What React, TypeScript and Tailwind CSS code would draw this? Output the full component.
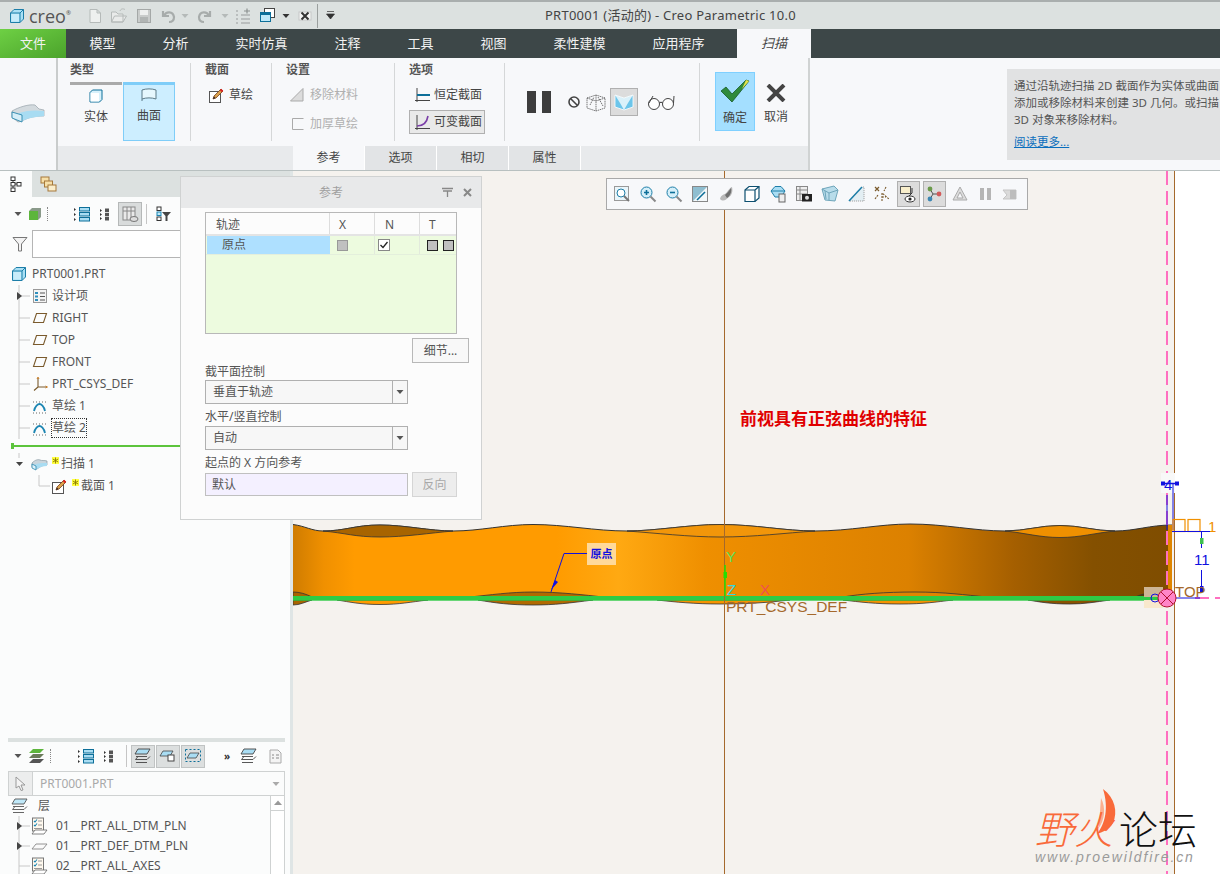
import React from "react";

const Svg = ({ s = 16, h, children }: { s?: number; h?: number; children: React.ReactNode }) => (
  <svg width={s} height={h ?? s} viewBox={`0 0 ${s} ${h ?? s}`} fill="none" className="shrink-0">
    {children}
  </svg>
);

const Cube = () => (
  <Svg s={16}>
    <path d="M1.5 5 L5 1.5 H14.5 V11 L11 14.5 H1.5 Z" fill="#a9e0f5" stroke="#1d7ea8" />
    <path d="M1.5 5 H11 V14.5 M11 5 L14.5 1.5" stroke="#1d7ea8" />
    <rect x={2.5} y={6} width={7.5} height={7.5} fill="#e8f8ff" opacity={0.5} />
  </Svg>
);

const Sweep = () => (
  <Svg s={17} h={14}>
    <path d="M1 6 C4 3 7 2 9 3 C11 4 13 3 16 4 V8 C12 8 10 9 6 12 L1 10 Z" fill="#c9d5dc" stroke="#8a9aa3" strokeWidth={0.7} />
    <path d="M3 8 C7 6 11 6 16 6 V9 C12 9 9 10 6 12 L3 11 Z" fill="#a8dcf2" />
    <path d="M1 7 L5 9 V13 L1 11 Z" fill="#dff3fb" stroke="#2a87ad" strokeWidth={0.8} />
  </Svg>
);

const Pencil = () => (
  <Svg s={17}>
    <rect x={1.5} y={4.5} width={11} height={11} fill="#fff" stroke="#555" />
    <path d="M5 12 L6 9 L13 2 L15 4 L8 11 Z" fill="#d9a24c" stroke="#7a3b1d" strokeWidth={0.8} />
    <path d="M12.5 2.5 L14.5 4.5" stroke="#d22" strokeWidth={2} />
    <path d="M5 12 L6 9.6 L7.4 11 Z" fill="#222" />
  </Svg>
);

const Plane = () => (
  <Svg s={16} h={12}>
    <path d="M4.5 1.5 H14.5 L11.5 10.5 H1.5 Z" stroke="#7a5a2c" strokeWidth={1.1} />
  </Svg>
);

const SketchIc = () => (
  <Svg s={15}>
    <path d="M2 12 C3 7 6 5 7.5 5 C9 5 12 7 13 12" stroke="#1d86b3" strokeWidth={1.8} />
    <path d="M1 3 H14 M1 14 H14" stroke="#666" strokeWidth={1} strokeDasharray="1 2" />
  </Svg>
);

const Csys = () => (
  <Svg s={16}>
    <path d="M6 2 V11 H15 M6 11 L2 14.5" stroke="#7a5a2c" strokeWidth={1.1} />
    <path d="M5 3 L6 1 L7 3 M13.5 10 L15.5 11 L13.5 12" stroke="#c77b20" strokeWidth={0.9} />
  </Svg>
);

const ListIc = () => (
  <Svg s={16}>
    <rect x={1.5} y={1.5} width={13} height={13} fill="#f4f4f4" stroke="#999" />
    <path d="M3 4 H6 V6 H3 Z M3 7.5 H6 V9.5 H3 Z M3 11 H6 V13 H3 Z" fill="#2f8fbd" />
    <path d="M8 5 H13 M8 8.5 H13 M8 12 H13" stroke="#555" />
  </Svg>
);

const LinesIc = () => (
  <Svg s={16}>
    <path d="M0 2 L2 3.5 L0 5 Z M0 7 L2 8.5 L0 10 Z M0 12 L2 13.5 L0 15 Z" fill="#333" />
    <rect x={5.5} y={1.5} width={10} height={3.5} fill="#a9ddf3" stroke="#0d6f99" />
    <rect x={5.5} y={6.5} width={10} height={3.5} fill="#a9ddf3" stroke="#0d6f99" />
    <rect x={5.5} y={11.5} width={10} height={3.5} fill="#a9ddf3" stroke="#0d6f99" />
  </Svg>
);

const DotsIc = () => (
  <Svg s={11} h={14}>
    <path d="M0 2 L2 3.5 L0 5 Z M0 6 L2 7.5 L0 9 Z M0 10 L2 11.5 L0 13 Z" fill="#333" />
    <rect x={5} y={1.5} width={4} height={3.5} fill="#555" />
    <rect x={5} y={5.8} width={4} height={3.5} fill="#555" />
    <rect x={5} y={10} width={4} height={3.5} fill="#555" />
  </Svg>
);

const Layers = ({ top = "#a9ddf3", stroke = "#444" }: { top?: string; stroke?: string }) => (
  <Svg s={18}>
    <path d="M4 2 H16 L13 7 H1 Z" fill={top} stroke={stroke} strokeWidth={0.9} />
    <path d="M2 9.5 H13 M1.5 12.5 L4 9.5 M16 9.5 L13 12.5 H1.5 M2 15.5 H13" stroke={stroke} strokeWidth={0.9} />
  </Svg>
);

const LayerRowIc = ({ flat }: { flat?: boolean }) =>
  flat ? (
    <Svg s={17} h={14}>
      <path d="M5 5 H16 L12 10 H1 Z" stroke="#888" strokeWidth={0.9} fill="#fafafa" />
    </Svg>
  ) : (
    <Svg s={17} h={18}>
      <rect x={1.5} y={1} width={11} height={13} fill="#fff9ee" stroke="#777" />
      <path d="M3 4 L4 5 L6 2.5 M3 8 L4 9 L6 6.5" stroke="#1d86b3" strokeWidth={1.1} />
      <path d="M7 4 H11 M7 8 H11 M3 11.5 H11" stroke="#999" />
      <path d="M4 13 H16 L13 17 H1 Z" fill="#fff" stroke="#666" strokeWidth={0.8} />
    </Svg>
  );

const Star = () => (
  <svg width={7} height={7} viewBox="0 0 7 7" className="shrink-0 mb-[7px]">
    <rect width={7} height={7} fill="#ffff40" />
    <path d="M3.5 0.5 V6.5 M0.8 2 L6.2 5 M6.2 2 L0.8 5" stroke="#8a7a00" strokeWidth={0.9} />
  </svg>
);

const Arrow = ({ dir = "right", color = "#444" }: { dir?: "right" | "down"; color?: string }) => (
  <svg width={8} height={8} viewBox="0 0 8 8" className="shrink-0">
    <path d={dir === "right" ? "M2 1 L6 4 L2 7 Z" : "M0.5 2 H7.5 L4 6 Z"} fill={color} />
  </svg>
);

const tabs = ["模型", "分析", "实时仿真", "注释", "工具", "视图", "柔性建模", "应用程序"];

const QuickBar = () => (
  <div className="h-[29px] bg-[#dce1e0] border-t-2 border-[#a9aeae] flex items-center text-[#555] shrink-0">
    <div className="w-[83px] pl-[9px] flex items-center gap-[4px] shrink-0">
      <Cube />
      <span className="text-[18px] leading-none text-[#555] [font-family:'Open_Sans',sans-serif]">creo</span>
      <span className="text-[6px] -ml-[4px] -mt-[4px]">®</span>
    </div>
    <div className="w-[24px] flex justify-center">
      <Svg s={16}>
        <path d="M3 1.5 H10 L13.5 5 V14.5 H3 Z M10 1.5 V5 H13.5" fill="#eef0ef" stroke="#b5bab9" />
      </Svg>
    </div>
    <div className="w-[24px] flex justify-center">
      <Svg s={18}>
        <path d="M1.5 15 V5 H6 L8 7 H13 V15 Z M1.5 15 L4.5 9 H16.5 L13 15 Z" fill="#e9ebea" stroke="#b5bab9" />
        <path d="M10 4 C11 1.5 13 1.5 15 2.5" stroke="#b5bab9" />
      </Svg>
    </div>
    <div className="w-[25px] flex justify-center">
      <Svg s={16}>
        <rect x={1.5} y={1.5} width={13} height={13} fill="#c9cccb" stroke="#a4a8a7" />
        <rect x={4} y={2} width={8} height={5} fill="#eef0ef" />
        <rect x={4} y={9} width={8} height={5} fill="#b1b5b4" />
      </Svg>
    </div>
    <div className="w-[24px] flex justify-center">
      <Svg s={16}>
        <path d="M3 9 L3 3 M3 8 H9 M4 8 C6 3 13 3 14 9 C14 12 12 14 9 14" stroke="#a7acab" strokeWidth={2.2} />
      </Svg>
    </div>
    <div className="w-[10px] flex justify-center">
      <Arrow dir="down" color="#b5bab9" />
    </div>
    <div className="w-[30px] flex justify-center">
      <Svg s={16}>
        <path d="M13 3 L13 9 M13 8 H7 M12 8 C10 3 3 3 2 9 C2 12 4 14 7 14" stroke="#a7acab" strokeWidth={2.2} />
      </Svg>
    </div>
    <div className="w-[10px] flex justify-center">
      <Arrow dir="down" color="#b5bab9" />
    </div>
    <div className="w-[26px] flex justify-center">
      <Svg s={16}>
        <path d="M1 3 H3 M1 7 H3 M1 11 H3 M1 15 H3 M6 7 H15 M6 11 H15 M6 15 H15" stroke="#aeb3b2" strokeWidth={1.5} />
        <path d="M9 3 H15 M12 0.5 V5.5" stroke="#8c9190" strokeWidth={1.2} />
      </Svg>
    </div>
    <div className="w-[22px] flex justify-center">
      <Svg s={17}>
        <rect x={5.5} y={1.5} width={10} height={9} fill="#fff" stroke="#444" />
        <rect x={1.5} y={5.5} width={10} height={9} fill="#bfe8f8" stroke="#0d6f99" />
        <rect x={1.5} y={5.5} width={10} height={2.5} fill="#0d6f99" />
      </Svg>
    </div>
    <div className="w-[12px] flex justify-end">
      <Arrow dir="down" color="#333" />
    </div>
    <div className="w-[22px] flex justify-end">
      <Svg s={14}>
        <rect x={1} y={3} width={12} height={8} fill="#f5f5f5" stroke="#c5c8c7" />
        <path d="M3.5 3.5 L10.5 10.5 M10.5 3.5 L3.5 10.5" stroke="#333" strokeWidth={2} />
      </Svg>
    </div>
    <div className="w-px h-[24px] bg-[#9a9f9e] ml-[5px]" />
    <div className="w-[24px] flex justify-center">
      <svg width={9} height={9} viewBox="0 0 9 9">
        <path d="M1 0.5 H8 M0.5 3 H8.5 L4.5 8 Z" fill="#333" stroke="#333" strokeWidth={0.7} />
      </svg>
    </div>
    <div className="ml-[203px] text-[13px] tracking-[0.25px] whitespace-nowrap text-[#444]">PRT0001 (活动的) - Creo Parametric 10.0</div>
  </div>
);

const TabBar = () => (
  <div className="h-[29px] bg-[#3d4748] flex items-stretch text-[13px] text-[#f2f2f2] shrink-0">
    <div className="w-[66px] flex items-center justify-center bg-gradient-to-br from-[#6ed044] to-[#4ba32b]">文件</div>
    {tabs.map((t) => (
      <div key={t} className="px-[23.5px] flex items-center whitespace-nowrap">
        {t}
      </div>
    ))}
    <div className="w-[74px] ml-[9px] bg-[#f7f8fa] text-[#444] italic flex items-center justify-center">扫描</div>
  </div>
);

const Group = ({ w, label, children, pl = 14 }: { w: string; label?: string; children: React.ReactNode; pl?: number }) => (
  <div className={`${w} h-[78px] mt-[5px] border-r border-[#d5d7d8] shrink-0 flex flex-col`}>
    {label && (
      <div className="h-[14px] text-[12px] leading-[14px] font-bold text-[#555] whitespace-nowrap" style={{ paddingLeft: pl }}>
        {label}
      </div>
    )}
    {children}
  </div>
);

const Ribbon = () => (
  <div className="h-[113px] bg-[#f7f8fa] border-b border-[#b8c0c0] flex shrink-0 text-[12px] text-[#444]">
    <div className="w-[58px] border-r-2 border-[#c9cccc] flex items-center justify-center shrink-0 pb-[3px]">
      <svg width={34} height={20} viewBox="0 0 34 20">
        <path d="M1 8 C8 4 18 1 24 2 L28 6 L33 7 V13 C24 13 18 14 11 18 L7 19 L1 14 Z" fill="#d3dade" stroke="#98a4aa" strokeWidth={0.7} />
        <path d="M8 10 C16 7 26 7 33 8 V13 C24 14 18 15 11 18 L8 17 Z" fill="#a8dcf2" />
        <path d="M1 9 L11 12 V19 L1 15 Z" fill="#d5eef8" stroke="#2a87ad" strokeWidth={0.9} />
      </svg>
    </div>
    <div className="w-[752px] shrink-0 flex flex-col border-r-2 border-[#d0d3d3]">
      <div className="h-[88px] flex">
        <Group w="w-[133px]" label="类型" pl={12}>
          <div className="flex ml-[12px] mt-[5px] h-[60px]">
            <div className="w-[52px] border-t-[3px] border-[#aaaaaa] flex flex-col items-center pt-[4px]">
              <svg width={14} height={14} viewBox="0 0 14 14">
                <path d="M1 3.5 L3.5 1 H13 V10.5 L10.5 13 H1 Z" fill="#d8f1fb" stroke="#0d6f99" />
                <rect x={1.5} y={4} width={8.5} height={8.5} fill="#fff" />
              </svg>
              <span className="mt-[5px]">实体</span>
            </div>
            <div className="w-[52px] ml-px border border-[#7fcdf8] border-t-[3px] bg-[#cdeeff] flex flex-col items-center pt-[3px]">
              <svg width={16} height={14} viewBox="0 0 16 14">
                <path d="M1 2 C5 0.5 11 0.5 15 2 V11 C11 9.5 5 9.5 1 11 Z" fill="#e6f7fd" stroke="#5d7a87" />
                <path d="M1 11 L1 13" stroke="#5d7a87" />
              </svg>
              <span className="mt-[5px]">曲面</span>
            </div>
          </div>
        </Group>
        <Group w="w-[81px]" label="截面">
          <div className="flex items-center gap-[4px] ml-[17px] mt-[9px]">
            <Pencil />
            <span>草绘</span>
          </div>
        </Group>
        <Group w="w-[123px]" label="设置">
          <div className="flex items-center gap-[5px] ml-[17px] mt-[9px] text-[#b0b0b0]">
            <Svg s={16}>
              <path d="M1.5 14 L14 1.5 V14 Z" fill="#dcdcdc" stroke="#aaa" />
            </Svg>
            <span>移除材料</span>
          </div>
          <div className="flex items-center gap-[6px] ml-[20px] mt-[11px] text-[#b0b0b0]">
            <Svg s={12}>
              <path d="M11.5 0.5 H0.5 V11.5 H11.5" stroke="#aaa" />
            </Svg>
            <span>加厚草绘</span>
          </div>
        </Group>
        <Group w="w-[110px]" label="选项">
          <div className="flex items-center gap-[3px] ml-[19px] mt-[9px]">
            <Svg s={17}>
              <path d="M3 1 V15 M1 13.5 H16" stroke="#444" />
              <path d="M3 8 H16" stroke="#0d6f99" strokeWidth={2} />
            </Svg>
            <span>恒定截面</span>
          </div>
          <div className="flex items-center gap-[3px] ml-[14px] mt-[6px] w-[76px] h-[24px] bg-[#e9e9e9] border border-[#b0b0b0] pl-[4px]">
            <Svg s={17}>
              <path d="M3 1 V16 M1 14.5 H16" stroke="#444" />
              <path d="M3 12 C9 12 13 8 14 2" stroke="#7b3fa8" strokeWidth={1.6} />
            </Svg>
            <span>可变截面</span>
          </div>
        </Group>
        <Group w="w-[195px]">
          <div className="flex items-center h-[28px] mt-[25px] pl-[22px]">
            <div className="flex gap-[6px] mr-[16px]">
              <div className="w-[9px] h-[22px] bg-[#3d3d3d]" />
              <div className="w-[9px] h-[22px] bg-[#3d3d3d]" />
            </div>
            <Svg s={14}>
              <circle cx={7} cy={7} r={5} stroke="#444" strokeWidth={1.6} />
              <path d="M3.5 3.5 L10.5 10.5" stroke="#444" strokeWidth={1.6} />
            </Svg>
            <div className="w-[5px]" />
            <Svg s={20}>
              <path d="M1 6 L10 3 L19 6 V16 L10 19 L1 16 Z M10 3 V19 M1 6 L10 9 L19 6 M4 13 L8 5 M12 5 L17 14" stroke="#555" strokeWidth={0.8} strokeDasharray="1.5 0.7" />
            </Svg>
            <div className="w-[4px]" />
            <div className="w-[28px] h-[28px] bg-[#dcdcdc] border border-[#b0b0b0] flex items-center justify-center">
              <Svg s={20}>
                <path d="M1 3 L10 6 L19 3 V15 L10 18 L1 15 Z" fill="#6cc5ea" stroke="#fff" strokeWidth={0.8} />
                <path d="M1 3 L10 6 V18 L6 11 Z M19 3 L10 6 V18 L14 11 Z" fill="#fff" opacity={0.75} />
              </Svg>
            </div>
            <div className="w-[9px]" />
            <svg width={28} height={18} viewBox="0 0 28 18">
              <circle cx={7} cy={11} r={5.5} stroke="#444" fill="#fff" />
              <circle cx={21} cy={11} r={5.5} stroke="#444" fill="#fff" />
              <path d="M12.5 10 C13.5 9 14.5 9 15.5 10 M2 10 L6 3 M26.5 10 L27 3" stroke="#444" />
            </svg>
          </div>
        </Group>
        <div className="w-[108px] h-[78px] mt-[5px] shrink-0 flex items-start pt-[9px] pl-[15px] gap-[2px]">
          <div className="w-[40px] h-[59px] bg-[#a4dfff] border border-[#7fd0ff] flex flex-col items-center pt-[6px]">
            <svg width={30} height={24} viewBox="0 0 30 24">
              <path d="M1 12 L6 8 L12 15 L26 1 L29 2 L12 23 Z" fill="#2f8a3c" stroke="#175a2a" strokeWidth={0.8} />
              <path d="M26 1 L29 2 L22 10 Z" fill="#e7e24a" />
            </svg>
            <span className="mt-[6px]">确定</span>
          </div>
          <div className="w-[38px] flex flex-col items-center pt-[12px]">
            <svg width={20} height={18} viewBox="0 0 20 18">
              <path d="M2 1 L18 17 M18 1 L2 17" stroke="#444" strokeWidth={4} />
            </svg>
            <span className="mt-[6px]">取消</span>
          </div>
        </div>
      </div>
      <div className="h-[24px] bg-[#e8eaec] flex pl-[235px] shrink-0">
        {["参考", "选项", "相切", "属性"].map((t, i) => (
          <div key={t} className={`w-[72px] flex items-center justify-center border-r border-white ${i === 0 ? "bg-[#f7f8fa]" : "bg-[#e2e4e6]"}`}>
            {t}
          </div>
        ))}
      </div>
    </div>
    <div className="flex-1 pl-[197px] pt-[11px] overflow-hidden">
      <div className="h-[91px] bg-[#e1e2e3] pl-[7px] pt-[8px] text-[11.5px] leading-[17px] text-[#555] whitespace-nowrap overflow-hidden">
        <div>通过沿轨迹扫描 2D 截面作为实体或曲面</div>
        <div>添加或移除材料来创建 3D 几何。或扫描</div>
        <div>3D 对象来移除材料。</div>
        <div className="mt-[5px] text-[#0a6ebd] underline">阅读更多...</div>
      </div>
    </div>
  </div>
);

const Elbow = ({ expand }: { expand?: boolean }) => (
  <svg width={32} height={22} viewBox="0 0 32 22" fill="none" className="shrink-0">
    <path d="M19 0 V22 M19 11 H30" stroke="#c8c8c8" />
    {expand && <path d="M17 7 L22 11 L17 15 Z" fill="#444" />}
  </svg>
);

const TreeRow = ({ icon, label, expand, focus }: { icon: React.ReactNode; label: string; expand?: boolean; focus?: boolean }) => (
  <div className="h-[22px] flex items-center">
    <Elbow expand={expand} />
    <div className="w-[20px] flex shrink-0">{icon}</div>
    <span className={focus ? "border border-dotted border-[#333] h-[20px] leading-[18px] -ml-px" : ""}>{label}</span>
  </div>
);

const LeftPanel = () => (
  <div className="w-[290px] shrink-0 bg-[#fbfcfc] flex flex-col text-[12px] text-[#555] overflow-hidden">
    <div className="h-[26px] bg-[#dce1e0] flex shrink-0">
      <div className="w-[32px] bg-[#fbfcfc] flex items-center justify-center">
        <Svg s={12} h={16}>
          <path d="M3 4 V14 M3 8 H7" stroke="#444" />
          <rect x={1} y={1} width={4} height={3.5} fill="#fff" stroke="#333" />
          <rect x={1} y={6.5} width={4} height={3.5} fill="#fff" stroke="#333" />
          <rect x={1} y={12} width={4} height={3.5} fill="#fff" stroke="#333" />
          <rect x={7} y={6.5} width={4} height={3.5} fill="#fff" stroke="#333" />
        </Svg>
      </div>
      <div className="w-[32px] flex items-center justify-center">
        <Svg s={17}>
          <rect x={1} y={1} width={8} height={6} fill="#f6dfa8" stroke="#a5793a" />
          <rect x={4.5} y={5} width={8} height={6} fill="#f6dfa8" stroke="#a5793a" />
          <rect x={8} y={9} width={8} height={6} fill="#fbeecb" stroke="#a5793a" />
        </Svg>
      </div>
    </div>
    <div className="h-[28px] mt-[3px] flex items-center pl-[14px] shrink-0">
      <Arrow dir="down" color="#555" />
      <div className="w-[6px]" />
      <Svg s={14}>
        <path d="M1 4 L4 1 H13 V10 L10 13 H1 Z" fill="#8a9a8a" />
        <rect x={1} y={4} width={9} height={9} fill="#5db53c" />
      </Svg>
      <div className="w-[6px] h-[14px] border-r border-dotted border-[#888]" />
      <div className="w-[26px]" />
      <LinesIc />
      <div className="w-[10px]" />
      <DotsIc />
      <div className="w-[7px]" />
      <div className="w-[24px] h-[24px] bg-[#d9dcdc] border border-[#b5b8b8] flex items-center justify-center">
        <Svg s={18}>
          <rect x={2} y={2} width={12} height={13} stroke="#888" fill="#e9e9e9" />
          <path d="M2 6 H14 M6 2 V15 M10 2 V15" stroke="#888" />
          <ellipse cx={13} cy={14} rx={4} ry={2.5} fill="#ddd" stroke="#777" />
        </Svg>
      </div>
      <div className="w-px h-[20px] bg-[#c5c5c5] ml-[4px] mr-[9px]" />
      <Svg s={16}>
        <rect x={1} y={1} width={4} height={3.5} stroke="#333" fill="#fff" />
        <rect x={1} y={6} width={4} height={3.5} stroke="#1d86b3" fill="#bfe8f8" />
        <rect x={1} y={11} width={4} height={3.5} stroke="#333" fill="#fff" />
        <path d="M6 6 H15 L11.5 10 V15 H9.5 V10 Z" fill="#444" />
      </Svg>
    </div>
    <div className="h-[28px] mt-[2px] flex items-center pl-[12px] gap-[4px] shrink-0">
      <Svg s={16}>
        <path d="M1 1.5 H15 L9.5 8 V15 H6.5 V8 Z" fill="#f3f3f3" stroke="#777" />
      </Svg>
      <div className="flex-1 h-[28px] bg-white border border-[#b5b5b5]" />
    </div>
    <div className="h-[22px] mt-[5px] flex items-center pl-[11px] gap-[5px] shrink-0">
      <Cube />
      <span>PRT0001.PRT</span>
    </div>
    <div className="shrink-0">
      <TreeRow expand icon={<ListIc />} label="设计项" />
      <TreeRow icon={<Plane />} label="RIGHT" />
      <TreeRow icon={<Plane />} label="TOP" />
      <TreeRow icon={<Plane />} label="FRONT" />
      <TreeRow icon={<Csys />} label="PRT_CSYS_DEF" />
      <TreeRow icon={<SketchIc />} label="草绘 1" />
      <TreeRow focus icon={<SketchIc />} label="草绘 2" />
    </div>
    <div className="h-[14px] flex items-center pl-[11px] shrink-0 relative">
      <div className="flex-1 h-[2px] bg-[#5cc43c]" />
      <div className="absolute left-[11px] w-[3px] h-[6px] bg-[#5cc43c]" />
    </div>
    <div className="h-[22px] flex items-center shrink-0">
      <svg width={31} height={22} viewBox="0 0 31 22" fill="none" className="shrink-0">
        <path d="M19 0 V5" stroke="#c8c8c8" />
        <path d="M16 9 H23 L19.5 13 Z" fill="#444" />
      </svg>
      <Sweep />
      <div className="w-[4px]" />
      <Star />
      <span className="ml-[2px]">扫描 1</span>
    </div>
    <div className="h-[22px] flex items-center shrink-0">
      <svg width={51} height={22} viewBox="0 0 51 22" fill="none" className="shrink-0">
        <path d="M39 0 V11 H50" stroke="#c8c8c8" />
      </svg>
      <Pencil />
      <div className="w-[4px]" />
      <Star />
      <span className="ml-[2px]">截面 1</span>
    </div>
    <div className="flex-1" />
    <div className="h-[4px] bg-[#dce1e0] ml-[8px] mr-[5px] mb-[4px] shrink-0" />
    <div className="h-[20px] flex items-center pl-[14px] shrink-0">
      <Arrow dir="down" color="#555" />
      <div className="w-[6px]" />
      <Svg s={17}>
        <path d="M5 1 H16 L12 5 H1 Z" fill="#5db53c" />
        <path d="M5 6 H16 L12 10 H1 Z" fill="#6b7a5a" />
        <path d="M5 11 H16 L12 15 H1 Z" fill="#555" />
      </Svg>
      <div className="w-[6px] h-[14px] border-r border-dotted border-[#888]" />
      <div className="w-[27px]" />
      <LinesIc />
      <div className="w-[10px]" />
      <DotsIc />
      <div className="w-px h-[22px] bg-[#c5c5c5] ml-[11px] mr-[4px]" />
      <div className="flex gap-px">
        <div className="w-[24px] h-[23px] bg-[#dcdfdf] border border-[#c0c3c3] flex items-center justify-center">
          <Layers />
        </div>
        <div className="w-[24px] h-[23px] bg-[#dcdfdf] border border-[#c0c3c3] flex items-center justify-center">
          <Svg s={18}>
            <path d="M4 4 H14 L11 9 H1 Z" fill="#a9ddf3" stroke="#444" strokeWidth={0.8} />
            <rect x={9} y={8} width={6} height={6} fill="#fff" stroke="#444" />
          </Svg>
        </div>
        <div className="w-[24px] h-[23px] bg-[#dcdfdf] border border-[#c0c3c3] flex items-center justify-center">
          <Svg s={18}>
            <rect x={1.5} y={2.5} width={15} height={12} stroke="#0d6f99" strokeDasharray="2 2" />
            <path d="M6 6 H15 L12 11 H3 Z" fill="#a9ddf3" stroke="#444" strokeWidth={0.8} />
          </Svg>
        </div>
      </div>
      <span className="ml-[19px] text-[10px] font-bold text-[#333]">»</span>
      <div className="ml-[10px]">
        <Layers />
      </div>
      <div className="ml-[10px]">
        <Svg s={15}>
          <path d="M2 1 H10 L13 4 V14 H2 Z" fill="#f4f4f4" stroke="#aaa" />
          <path d="M4 6 H6 M8 6 H11 M4 9 H6 M8 9 H11" stroke="#888" />
        </Svg>
      </div>
    </div>
    <div className="h-[25px] mt-[5px] ml-[8px] mr-[5px] border border-[#cfd2d2] flex items-center shrink-0 text-[#a9a9a9]">
      <div className="w-[24px] h-full bg-[#eceded] border-r border-[#cfd2d2] flex items-center justify-center">
        <Svg s={13} h={15}>
          <path d="M2 1 L11 9 H7 L9 14 L7 14.5 L5 10 L2 12 Z" fill="#f4f4f4" stroke="#999" />
        </Svg>
      </div>
      <span className="ml-[7px] flex-1">PRT0001.PRT</span>
      <div className="w-[16px] flex justify-center">
        <Arrow dir="down" color="#aaa" />
      </div>
    </div>
    <div className="h-[78px] ml-[8px] mr-[5px] flex shrink-0 overflow-hidden">
      <div className="flex-1 overflow-hidden">
        <div className="h-[20px] flex items-center pl-[3px] gap-[9px]">
          <Layers top="#bfe8f8" stroke="#555" />
          <span>层</span>
        </div>
        {[
          ["01__PRT_ALL_DTM_PLN", true, false],
          ["01__PRT_DEF_DTM_PLN", true, true],
          ["02__PRT_ALL_AXES", false, false],
        ].map(([t, exp, flat]) => (
          <div key={t as string} className="h-[20px] flex items-center whitespace-nowrap">
            <svg width={23} height={20} viewBox="0 0 23 20" fill="none" className="shrink-0">
              <path d="M11 0 V20 M11 10 H22" stroke="#c8c8c8" />
              {exp && <path d="M9 6 L14 10 L9 14 Z" fill="#444" />}
            </svg>
            <div className="w-[17px] flex justify-center shrink-0">
              <LayerRowIc flat={flat as boolean} />
            </div>
            <span className="ml-[8px]">{t as string}</span>
          </div>
        ))}
      </div>
      <div className="w-[15px] border-l border-[#cfd2d2] bg-white border-r">
        <div className="h-[15px] border-b border-[#cfd2d2] flex justify-center items-center">
          <svg width={8} height={6} viewBox="0 0 8 6">
            <path d="M0 5 L4 0.5 L8 5 Z" fill="#999" />
          </svg>
        </div>
      </div>
    </div>
  </div>
);

const SelectBox = ({ value }: { value: string }) => (
  <div className="w-[203px] h-[24px] border border-[#b0b0b0] bg-[#f7f7f7] flex items-center">
    <span className="flex-1 pl-[7px]">{value}</span>
    <div className="w-[15px] h-full border-l border-[#b0b0b0] flex items-center justify-center">
      <Arrow dir="down" color="#555" />
    </div>
  </div>
);

const RefDialog = () => (
  <div className="absolute left-[180px] top-[5px] w-[302px] h-[344px] bg-[#fcfcfc] border border-[#d0d2d2] text-[12px] text-[#555] z-20">
    <div className="h-[31px] bg-[#e8e9ea] flex items-center justify-center relative">
      <span className="text-[#a0a0a0]">参考</span>
      <div className="absolute right-[9px] top-[10px] flex items-center gap-[9px]">
        <Svg s={13} h={11}>
          <path d="M1 1.5 H12 M2 4 H11 M6.5 4 V10" stroke="#888" strokeWidth={1.3} />
        </Svg>
        <Svg s={9}>
          <path d="M1 1 L8 8 M8 1 L1 8" stroke="#888" strokeWidth={2} />
        </Svg>
      </div>
    </div>
    <div className="pl-[24px] pt-[4px]">
      <div className="w-[252px] h-[122px] border border-[#b8b8b8] bg-[#edfbdf] flex flex-col">
        <div className="h-[23px] bg-[#fcfcfc] flex items-center border-b-2 border-[#e4e4e4]">
          <div className="w-[124px] pl-[10px] pt-[3px] h-full flex items-center border-r border-[#ddd]">轨迹</div>
          <div className="w-[45px] pl-[9px] pt-[3px] h-full flex items-center border-r border-[#ddd]">X</div>
          <div className="w-[45px] pl-[10px] pt-[3px] h-full flex items-center border-r border-[#ddd]">N</div>
          <div className="pl-[9px] pt-[3px]">T</div>
        </div>
        <div className="h-[19px] flex items-center border-b border-[#e4efdc]">
          <div className="w-[123px] ml-px pl-[15px] h-full bg-[#aee0ff] flex items-center">原点</div>
          <div className="w-[45px] h-full pl-[7px] flex items-center border-r border-[#e2eadc]">
            <div className="w-[11px] h-[11px] bg-[#c0c0c0] border border-[#999]" />
          </div>
          <div className="w-[45px] h-full pl-[3px] flex items-center border-r border-[#e2eadc]">
            <div className="w-[12px] h-[12px] bg-white border border-[#888] flex items-center justify-center">
              <svg width={10} height={10} viewBox="0 0 10 10">
                <path d="M1.5 5 L4 7.5 L8.5 2" stroke="#222" strokeWidth={1.3} fill="none" />
              </svg>
            </div>
          </div>
          <div className="flex pl-[7px] gap-[5px]">
            <div className="w-[11px] h-[11px] bg-[#c0c0c0] border border-[#222]" />
            <div className="w-[11px] h-[11px] bg-[#c0c0c0] border border-[#222]" />
          </div>
        </div>
      </div>
      <div className="flex justify-end pr-[12px] mt-[4px]">
        <div className="w-[57px] h-[25px] border border-[#b8b8b8] bg-[#f8f8f8] flex items-center justify-center">细节...</div>
      </div>
      <div className="h-[17px] leading-[17px]">截平面控制</div>
      <SelectBox value="垂直于轨迹" />
      <div className="h-[22px] leading-[26px]">水平/竖直控制</div>
      <SelectBox value="自动" />
      <div className="h-[23px] leading-[26px]">起点的 X 方向参考</div>
      <div className="flex gap-[4px]">
        <div className="w-[203px] h-[23px] border border-[#c0c0c0] bg-[#f4f0ff] flex items-center pl-[6px]">默认</div>
        <div className="w-[45px] h-[25px] -mt-px bg-[#ededed] border border-[#d5d5d5] flex items-center justify-center text-[#a8a8a8]">反向</div>
      </div>
    </div>
  </div>
);

const viewIcons: React.ReactNode[] = [
  <Svg s={18} key="a">
    <rect x={1.5} y={1.5} width={14} height={14} fill="#e9f5fa" stroke="#999" />
    <circle cx={8} cy={8} r={4} fill="#fff" stroke="#1d7ea8" />
    <path d="M11 11 L16 16" stroke="#777" strokeWidth={2} />
  </Svg>,
  <Svg s={18} key="b">
    <circle cx={7.5} cy={7.5} r={5.5} fill="#d5eff9" stroke="#1d7ea8" />
    <path d="M5 7.5 H10 M7.5 5 V10" stroke="#0d6f99" strokeWidth={1.6} />
    <path d="M11.5 11.5 L16.5 16.5" stroke="#888" strokeWidth={2} />
  </Svg>,
  <Svg s={18} key="c">
    <circle cx={7.5} cy={7.5} r={5.5} fill="#d5eff9" stroke="#1d7ea8" />
    <path d="M5 7.5 H10" stroke="#0d6f99" strokeWidth={1.6} />
    <path d="M11.5 11.5 L16.5 16.5" stroke="#888" strokeWidth={2} />
  </Svg>,
  <Svg s={18} key="d">
    <rect x={1.5} y={1.5} width={15} height={15} fill="#8fbed0" stroke="#888" />
    <path d="M2 16 L16 2 V16 Z" fill="#f4f8fa" />
    <path d="M6 15 L14 7" stroke="#0d6f99" strokeWidth={1.6} />
  </Svg>,
  <Svg s={18} key="e">
    <path d="M3 14 C4 9 8 10 10 7 C12 4 14 2 15 2 C16 6 15 10 12 12 C9 15 6 17 3 14 Z" fill="#b9b9b9" />
    <path d="M8 10 C10 8 12 6 14 3 C15 7 13 11 10 13 Z" fill="#6f6f6f" />
  </Svg>,
  <Svg s={18} key="f">
    <path d="M2 5 L6 1.5 H16 V13 L12 16.5 H2 Z" fill="#fff" stroke="#0d4f6f" strokeWidth={1.2} />
    <path d="M2 5 H12 V16.5 M12 5 L16 1.5" stroke="#0d4f6f" strokeWidth={1.2} />
  </Svg>,
  <Svg s={18} key="g">
    <path d="M2 6 L6 1.5 H12 L16 6 L12 12 H6 Z" fill="#a9ddf3" stroke="#1d7ea8" />
    <path d="M2 6 H16" stroke="#1d7ea8" />
    <rect x={10} y={9} width={6} height={8} fill="#eee" stroke="#666" />
  </Svg>,
  <Svg s={18} key="h">
    <rect x={1.5} y={1.5} width={11} height={14} fill="#eee" stroke="#888" />
    <path d="M1.5 5 H12.5 M1.5 9 H12.5 M5 1.5 V15.5" stroke="#888" />
    <rect x={7} y={9} width={10} height={7.5} fill="#222" />
    <circle cx={12} cy={12.7} r={2} fill="#ddd" />
  </Svg>,
  <Svg s={18} key="i">
    <path d="M1 4 L13 1 L17 5 L14 16 L4 15 Z" fill="#b8dcea" stroke="#6ea5ba" />
    <path d="M1 4 L8 8 L17 5 M8 8 L8 15 M4 6 L5 14" stroke="#6ea5ba" />
  </Svg>,
  <Svg s={18} key="j">
    <path d="M2 16 L15 2 H17 V16 Z" fill="#e3eef3" stroke="#999" strokeDasharray="1 1" />
    <path d="M2 16 L15 2" stroke="#1d7ea8" strokeWidth={1.5} />
  </Svg>,
  <Svg s={18} key="k">
    <path d="M2 2 L6 6 M6 2 L2 6" stroke="#7a5a2c" strokeWidth={1.2} />
    <path d="M13 2 L11 6 M2 14 L5 10 M9 16 V8 L16 14 M9 12 H13" stroke="#7a5a2c" strokeWidth={1.1} strokeDasharray="2 1" />
  </Svg>,
];

const ViewToolbar = () => (
  <div className="absolute left-[313px] top-[7px] w-[422px] h-[32px] bg-[#f7f8fa] border border-[#a9a9a9] flex items-center pl-[2px] z-10">
    {viewIcons.map((ic, i) => (
      <div key={i} className="w-[26px] flex justify-center shrink-0">
        {ic}
      </div>
    ))}
    <div className="w-[23px] h-[26px] bg-[#dcdcdc] border border-[#b0b0b0] flex items-center justify-center shrink-0 mx-[1.5px]">
      <Svg s={18}>
        <rect x={1.5} y={1.5} width={10} height={7} fill="#f8eecb" stroke="#555" />
        <path d="M13 3 V8 L10 11" stroke="#333" />
        <ellipse cx={11} cy={14} rx={5} ry={3} fill="#fff" stroke="#333" />
        <circle cx={11} cy={14} r={1.6} fill="#222" />
      </Svg>
    </div>
    <div className="w-[23px] h-[26px] bg-[#dcdcdc] border border-[#b0b0b0] flex items-center justify-center shrink-0 mx-[1.5px]">
      <Svg s={18}>
        <path d="M5 4 L8 9 L14 9 M8 9 L5 14" stroke="#555" />
        <circle cx={5} cy={4} r={2.4} fill="#6a9a4a" />
        <circle cx={14} cy={9} r={2.4} fill="#d25a5a" />
        <circle cx={5} cy={14} r={2.4} fill="#3d87b3" />
      </Svg>
    </div>
    <div className="w-[26px] flex justify-center shrink-0">
      <Svg s={18}>
        <path d="M9 2 L16 15 H2 Z M9 7 L12 13 H6 Z" fill="#ddd" fillRule="evenodd" stroke="#aaa" />
      </Svg>
    </div>
    <div className="w-[24px] flex justify-center gap-[3px] shrink-0">
      <div className="w-[4px] h-[12px] bg-[#b5b5b5]" />
      <div className="w-[4px] h-[12px] bg-[#b5b5b5]" />
    </div>
    <div className="w-[26px] flex justify-center shrink-0">
      <Svg s={16}>
        <path d="M1 4 H14 V13 H1 L5 9 Z" fill="#dadada" stroke="#c5c5c5" />
        <rect x={8} y={4} width={6} height={9} fill="#bdbdbd" />
      </Svg>
    </div>
  </div>
);

const TOP_EDGE =
  "M293 524.5 C305 526 312 531 323 531 C345 531 355 525 380 525 C405 525 430 531 453 531 C480 531 505 524.5 533 524.5 C565 524.5 595 531 627 531 C655 531 690 524.5 720 524.5 C755 524.5 785 531 815 531 C850 531 880 524 910 524 C945 524 975 531 1005 531 C1025 531 1040 525.5 1060 525.5 C1080 525.5 1095 531 1115 531 C1135 531 1150 525 1172 525";

const Lens = ({ d, fill }: { d: string; fill: string }) => <path d={d} fill={fill} stroke="#333" strokeWidth={0.8} />;

const Model = () => (
  <svg className="absolute inset-0" width={927} height={703} viewBox="293 171 927 703">
    <defs>
      <linearGradient id="body" x1="293" x2="1172" y1="0" y2="0" gradientUnits="userSpaceOnUse">
        <stop offset="0" stopColor="#cf7c00" />
        <stop offset="0.035" stopColor="#f09000" />
        <stop offset="0.07" stopColor="#ff9b00" />
        <stop offset="0.3" stopColor="#ff9b00" />
        <stop offset="0.37" stopColor="#ffa912" />
        <stop offset="0.47" stopColor="#ef8f00" />
        <stop offset="0.7" stopColor="#dc8100" />
        <stop offset="0.82" stopColor="#a55f00" />
        <stop offset="0.91" stopColor="#845000" />
        <stop offset="1" stopColor="#7f4d00" />
      </linearGradient>
    </defs>
    <rect x={1174} y={171} width={46} height={703} fill="#ffffff" />
    <path d={`${TOP_EDGE} L1172 597 L293 597 Z`} fill="url(#body)" />
    <path d={TOP_EDGE} stroke="#333" strokeWidth={1} fill="none" />
    <rect x={1168} y={525} width={4} height={72} fill="#e08600" />
    <Lens d="M323 531 C345 531 355 525 380 525 C405 525 430 531 453 531 C430 533 405 537 380 537 C355 537 345 533 323 531 Z" fill="#a86400" />
    <Lens d="M627 531 C655 531 690 524.5 720 524.5 C755 524.5 785 531 815 531 C785 533 755 537 720 537 C690 537 655 533 627 531 Z" fill="#f2960a" />
    <Lens d="M1005 531 C1025 531 1040 525.5 1060 525.5 C1080 525.5 1095 531 1115 531 C1095 533 1080 537.5 1060 537.5 C1040 537.5 1025 533 1005 531 Z" fill="#ef9000" />

    <Lens d="M293 592 C300 592 306 594 312 597 H293 Z" fill="#a86400" />
    <Lens d="M470 597 C490 595 510 592 533 592 C560 592 585 595 603 597 Z" fill="#b06a00" />
    <Lens d="M843 597 C860 594 885 592 915 592 C945 592 965 595 987 597 Z" fill="#e08500" />
    <Lens d="M1135 597 C1142 594 1150 592 1160 592 V597 Z" fill="#5a3800" />
    <Lens d="M293 600 H312 C305 602 300 605 293 605 Z" fill="#a86400" />
    <Lens d="M337 600 H428 C410 602 400 604.5 380 604.5 C360 604.5 350 602 337 600 Z" fill="#ff9b00" />
    <Lens d="M478 600 H593 C570 603 555 605 533 605 C510 605 495 603 478 600 Z" fill="#b06a00" />
    <Lens d="M657 600 H790 C765 603 745 604 720 604 C695 604 675 602 657 600 Z" fill="#f59300" />
    <Lens d="M843 600 H953 C935 602 925 604 900 604 C875 604 860 602 843 600 Z" fill="#f59300" />
    <Lens d="M1028 600 H1110 C1095 602 1085 604 1070 604 C1050 604 1040 602 1028 600 Z" fill="#8a5200" />
    <rect x={293} y={596} width={867} height={4.7} fill="#2ecb45" />

    <path d="M724.5 171 V874 M1174.5 171 V874" stroke="#a5692c" strokeWidth={1} />
    <path d="M1167 171 V874" stroke="#ff6fc0" strokeWidth={2} strokeDasharray="14 6" />
    <path d="M1195 598 H1220" stroke="#ff6fc0" strokeWidth={2} strokeDasharray="14 6" />

    <rect x={587} y={543} width={29} height={22} fill="#ffd99a" />
    <path d="M587 553.5 H564 L551 592" stroke="#1010e0" strokeWidth={1} fill="none" />
    <path d="M551 590 L555 580 L558 582 Z" fill="#1010e0" />
    <text x={601.5} y={558} textAnchor="middle" fontSize={11} fontWeight={700} fill="#1010e0" fontFamily="'Noto Sans CJK SC',sans-serif">
      原点
    </text>

    <path d="M725 596 V565" stroke="#22e000" strokeWidth={1.5} />
    <rect x={723.5} y={572} width={3.5} height={6} fill="#22e000" />
    <text x={726} y={562} fontSize={15} fill="#5de05d" fontFamily="'Liberation Sans',sans-serif">Y</text>
    <text x={727} y={595} fontSize={15} fill="#30d8e8" fontFamily="'Liberation Sans',sans-serif">Z</text>
    <text x={760} y={595} fontSize={15} fill="#f05050" fontFamily="'Liberation Sans',sans-serif">X</text>
    <text x={726} y={612} fontSize={15.5} fill="#a5692c" fontFamily="'Liberation Sans',sans-serif">PRT_CSYS_DEF</text>

    <rect x={1144} y={587} width={19} height={10} fill="#cdb595" />
    <rect x={1144} y={600} width={19} height={8} fill="#f8e8cc" />
    <circle cx={1155} cy={598} r={4} stroke="#1010e0" fill="none" />

    <rect x={1161} y={473} width={14} height={20} fill="#f8f8f8" />
    <text x={1164} y={490} fontSize={15} fill="#1010e0" fontFamily="'Liberation Sans',sans-serif">4</text>
    <path d="M1161 483.5 H1179" stroke="#1010e0" strokeWidth={1.5} />
    <rect x={1161} y={481.5} width={4} height={4} fill="#1010e0" />
    <rect x={1175} y={481.5} width={4} height={4} fill="#1010e0" />
    <path d="M1173 484 V530 M1167 495 V530" stroke="#1010e0" strokeWidth={1} />
    <rect x={1173} y={519.5} width={12} height={12} fill="none" stroke="#f09000" strokeWidth={1.2} />
    <rect x={1188} y={519.5} width={12} height={12} fill="none" stroke="#f09000" strokeWidth={1.2} />
    <text x={1208} y={532} fontSize={15} fill="#f09000" fontFamily="'Liberation Sans',sans-serif">1</text>
    <path d="M1172 531.5 H1210 M1201.5 532 V548 M1201.5 570 V592" stroke="#1010e0" strokeWidth={1} />
    <rect x={1200} y={538} width={3.5} height={6} fill="#3fc050" />
    <text x={1194} y={565} fontSize={15} fill="#1010e0" fontFamily="'Liberation Sans',sans-serif">11</text>
    <rect x={1200} y={586} width={3.5} height={6} fill="#1010e0" />
    <path d="M1174 598 H1200" stroke="#1010e0" strokeWidth={1} />
    <text x={1175} y={597} fontSize={15} fill="#a5692c" fontFamily="'Liberation Sans',sans-serif">TOP</text>
    <circle cx={1167} cy={598} r={9} fill="#ff85c8" stroke="#b01030" strokeWidth={1} />
    <path d="M1161 592 L1173 604 M1173 592 L1161 604" stroke="#b01030" strokeWidth={1} />

    <path d="M1103 789 C1115 798 1118 812 1113 823 C1109 830 1102 832 1097 834 C1105 824 1109 808 1103 789 Z" fill="#f96a3a" />
    <path d="M1101 798 C1106 808 1105 820 1098 829 C1100 819 1100 808 1101 798 Z" fill="#fbb090" />
  </svg>
);

const Watermark = () => (
  <div className="absolute left-[742px] top-[637px] w-[180px] z-10">
    <div className="flex items-center h-[38px] text-[39px] leading-[38px] whitespace-nowrap [font-family:'Noto_Sans_CJK_SC',sans-serif] font-light">
      <span className="text-[#f96a3a] italic">野火</span>
      <span className="text-[#111] ml-[6px]">论坛</span>
    </div>
    <div className="h-[16px] text-[14px] leading-[16px] mt-[3px] italic tracking-[1.9px] text-[#9a9a9a] whitespace-nowrap [font-family:'Liberation_Sans',sans-serif]">www.proewildfire.cn</div>
  </div>
);

export default function App() {
  return (
    <div className="w-[1220px] h-[874px] overflow-hidden flex flex-col bg-white [font-family:'Noto_Sans','Noto_Sans_CJK_SC',sans-serif]">
      <QuickBar />
      <TabBar />
      <Ribbon />
      <div className="flex-1 flex relative min-h-0">
        <LeftPanel />
        <div className="w-[3px] bg-[#dfe5e5] shrink-0" />
        <div className="flex-1 bg-[#f5f2ee] relative overflow-hidden">
          <Model />
          <ViewToolbar />
          <div className="absolute left-[447px] top-[236px] text-[17px] font-bold text-[#e00000] whitespace-nowrap [font-family:'Liberation_Serif','Noto_Sans_CJK_SC',serif]">
            前视具有正弦曲线的特征
          </div>
          <Watermark />
        </div>
        <RefDialog />
      </div>
    </div>
  );
}
